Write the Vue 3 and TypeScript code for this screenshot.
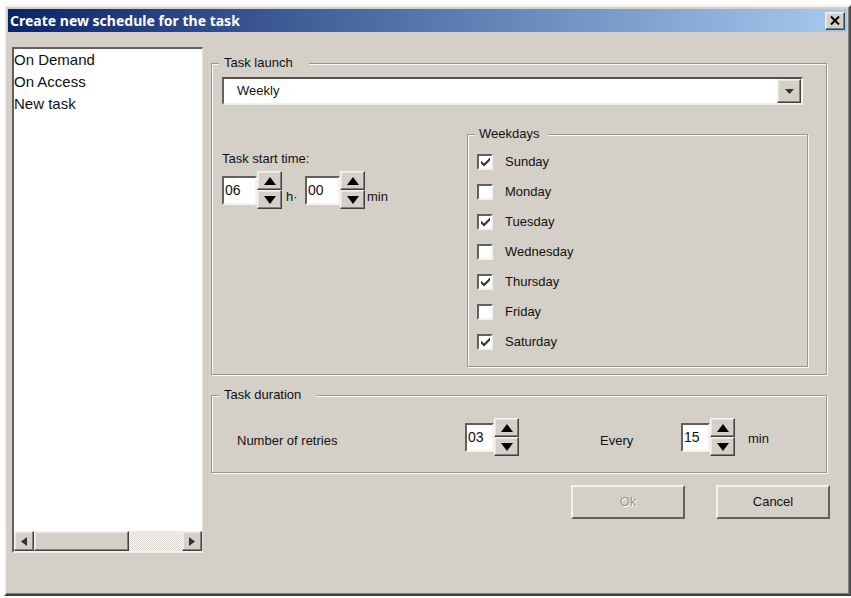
<script setup lang="ts">
import { reactive, ref } from 'vue'

interface Weekday {
  name: string
  checked: boolean
}

type SpinKey = 'hour' | 'minute' | 'retries' | 'interval'

const tasks: string[] = ['On Demand', 'On Access', 'New task']
const current = ref('')
const launch = ref('Weekly')
const launchModes: string[] = ['Hourly', 'Daily', 'Weekly', 'Monthly']

const days = reactive<Weekday[]>([
  { name: 'Sunday', checked: true },
  { name: 'Monday', checked: false },
  { name: 'Tuesday', checked: true },
  { name: 'Wednesday', checked: false },
  { name: 'Thursday', checked: true },
  { name: 'Friday', checked: false },
  { name: 'Saturday', checked: true },
])

const values = reactive<Record<SpinKey, string>>({
  hour: '06',
  minute: '00',
  retries: '03',
  interval: '15',
})
const limits: Record<SpinKey, number> = { hour: 23, minute: 59, retries: 99, interval: 59 }

function step(key: SpinKey, delta: number): void {
  const size = limits[key] + 1
  const next = ((Number(values[key]) || 0) + delta + size) % size
  values[key] = String(next).padStart(2, '0')
}
</script>

<template>
  <main class="page">
    <section class="window" role="dialog" aria-labelledby="dialog-title">
      <header class="titlebar">
        <h1 id="dialog-title">Create new schedule for the task</h1>
        <button type="button" class="raised close" aria-label="Close">
          <svg width="10" height="9" viewBox="0 0 10 9"><path d="M1 0.5 9 8.5M9 0.5 1 8.5" stroke="#000" stroke-width="2" /></svg>
        </button>
      </header>

      <div class="body">
        <nav class="list" aria-label="Tasks">
          <ul>
            <li v-for="task in tasks" :key="task">
              <button type="button" :aria-pressed="current === task" @click="current = task">{{ task }}</button>
            </li>
          </ul>
          <div class="scrollbar">
            <button type="button" class="raised" aria-label="Scroll left">
              <svg width="6" height="9" viewBox="0 0 6 9"><path d="M6 0v9L0 4.5z" fill="#333" /></svg>
            </button>
            <div class="track"><div class="raised thumb"></div></div>
            <button type="button" class="raised" aria-label="Scroll right">
              <svg width="6" height="9" viewBox="0 0 6 9"><path d="M0 0v9L6 4.5z" fill="#333" /></svg>
            </button>
          </div>
        </nav>

        <form class="settings" @submit.prevent>
          <fieldset class="group">
            <legend>Task launch</legend>
            <div class="launch">
              <div class="combo">
                <select v-model="launch" aria-label="Task launch">
                  <option v-for="mode in launchModes" :key="mode">{{ mode }}</option>
                </select>
                <span class="raised drop">
                  <svg width="9" height="5" viewBox="0 0 9 5"><path d="M0 0h9L4.5 5z" fill="#333" /></svg>
                </span>
              </div>

              <div class="when">
                <div class="start">
                  <label for="hour">Task start time:</label>
                  <div class="time">
                    <div class="spin wide">
                      <input id="hour" v-model="values.hour" type="text" />
                      <div class="arrows">
                        <button type="button" class="raised" aria-label="Hour up" @click="step('hour', 1)">
                          <svg width="12" height="8" viewBox="0 0 12 8"><path d="M6 0l6 8H0z" /></svg>
                        </button>
                        <button type="button" class="raised" aria-label="Hour down" @click="step('hour', -1)">
                          <svg width="12" height="8" viewBox="0 0 12 8"><path d="M0 0h12L6 8z" /></svg>
                        </button>
                      </div>
                    </div>
                    <span class="unit hours">h·</span>
                    <div class="spin wide">
                      <input id="minute" v-model="values.minute" type="text" />
                      <div class="arrows">
                        <button type="button" class="raised" aria-label="Minute up" @click="step('minute', 1)">
                          <svg width="12" height="8" viewBox="0 0 12 8"><path d="M6 0l6 8H0z" /></svg>
                        </button>
                        <button type="button" class="raised" aria-label="Minute down" @click="step('minute', -1)">
                          <svg width="12" height="8" viewBox="0 0 12 8"><path d="M0 0h12L6 8z" /></svg>
                        </button>
                      </div>
                    </div>
                    <label class="unit" for="minute">min</label>
                  </div>
                </div>

                <fieldset class="group weekdays">
                  <legend>Weekdays</legend>
                  <div class="days">
                    <label v-for="day in days" :key="day.name" class="day">
                      <span class="box">
                        <input v-model="day.checked" type="checkbox" />
                        <svg v-if="day.checked" width="9" height="9" viewBox="0 0 9 9"><path d="M0 2.5v3l3 3 6-6v-3l-6 6z" fill="#333" /></svg>
                      </span>
                      {{ day.name }}
                    </label>
                  </div>
                </fieldset>
              </div>
            </div>
          </fieldset>

          <fieldset class="group">
            <legend>Task duration</legend>
            <div class="duration">
              <label for="retries">Number of retries</label>
              <div class="spin">
                <input id="retries" v-model="values.retries" type="text" />
                <div class="arrows">
                  <button type="button" class="raised" aria-label="Retries up" @click="step('retries', 1)">
                    <svg width="12" height="8" viewBox="0 0 12 8"><path d="M6 0l6 8H0z" /></svg>
                  </button>
                  <button type="button" class="raised" aria-label="Retries down" @click="step('retries', -1)">
                    <svg width="12" height="8" viewBox="0 0 12 8"><path d="M0 0h12L6 8z" /></svg>
                  </button>
                </div>
              </div>
              <label for="interval">Every</label>
              <div class="spin">
                <input id="interval" v-model="values.interval" type="text" />
                <div class="arrows">
                  <button type="button" class="raised" aria-label="Interval up" @click="step('interval', 1)">
                    <svg width="12" height="8" viewBox="0 0 12 8"><path d="M6 0l6 8H0z" /></svg>
                  </button>
                  <button type="button" class="raised" aria-label="Interval down" @click="step('interval', -1)">
                    <svg width="12" height="8" viewBox="0 0 12 8"><path d="M0 0h12L6 8z" /></svg>
                  </button>
                </div>
              </div>
              <span>min</span>
            </div>
          </fieldset>

          <footer class="actions">
            <button type="submit" class="push" disabled>Ok</button>
            <button type="button" class="push">Cancel</button>
          </footer>
        </form>
      </div>
    </section>
  </main>
</template>

<style>
body {
  background: #fff;
}
</style>

<style scoped>
.page,
.page * {
  box-sizing: border-box;
}

.page {
  display: flex;
  min-height: 100vh;
  padding: 5px 0 2px 4px;
  font: 13px/16px "Liberation Sans", sans-serif;
  color: #111;
}

button,
input,
select {
  margin: 0;
  padding: 0;
  border-radius: 0;
  font: inherit;
  color: inherit;
}

svg {
  display: block;
}

.window {
  flex: 1;
  display: flex;
  flex-direction: column;
  min-width: 0;
  padding: 1px;
  background: #d4d0c8;
  border: 2px solid;
  border-color: #f6f3f0 #505050 #404040 #f6f3f0;
  box-shadow: inset -1px -1px 0 #808080;
}

.titlebar {
  display: flex;
  align-items: center;
  justify-content: space-between;
  height: 23px;
  margin: 1px 1px 0 1px;
  padding: 0 2px;
  background: linear-gradient(90deg, #0a246a, #a6caf0);
}

.titlebar h1 {
  margin: 0;
  font: bold 14px/20px "Noto Sans", "DejaVu Sans", sans-serif;
  color: #fff;
}

.raised {
  display: grid;
  place-items: center;
  background: #d4d0c8;
  border: 1px solid;
  border-color: #f4f2ee #404040 #404040 #f4f2ee;
  box-shadow: inset -1px -1px 0 #808080, inset 1px 1px 0 #e8e6e0;
}

.close {
  width: 20px;
  height: 18px;
}

.body {
  flex: 1;
  display: flex;
  gap: 8px;
  padding: 15px 18px 40px 5px;
}

.list {
  flex: 0 0 191px;
  display: flex;
  flex-direction: column;
  background: #fff;
  border: solid;
  border-width: 2px 1px 2px 2px;
  border-color: #606060 #e4e2dc #f4f2ee #606060;
}

.list ul {
  flex: 1;
  margin: 0;
  padding: 0;
  list-style: none;
}

.list li button {
  display: block;
  width: 100%;
  background: none;
  border: 0;
  text-align: left;
  font-size: 15px;
  line-height: 22px;
}

.list li button[aria-pressed="true"] {
  background: #0a246a;
  color: #fff;
}

.scrollbar {
  display: flex;
  height: 20px;
}

.scrollbar button {
  width: 20px;
}

.track {
  flex: 1;
  background: repeating-conic-gradient(#dedbd5 0 25%, #f6f5f2 0 50%) 0 0 / 2px 2px;
}

.thumb {
  width: 64%;
  height: 100%;
}

.settings {
  flex: 1;
  min-width: 0;
  padding-top: 8px;
}

.group {
  min-width: 0;
  margin: 0 3px 12px 0;
  padding: 0 7px;
  border: 1px solid #999690;
  box-shadow: inset 1px 1px 0 #faf9f7, 1px 1px 0 #faf9f7;
}

.group legend {
  padding: 0 16px 0 5px;
  background: #d4d0c8;
}

.launch {
  padding: 6px 11px 7px 3px;
}

.combo {
  display: grid;
  grid-template-columns: 1fr 24px;
  height: 28px;
  margin: 0 5px 21px 0;
  background: #fff;
  border: 2px solid;
  border-color: #505050 #f4f2ee #f4f2ee #606060;
}

.combo select {
  grid-area: 1 / 1 / 2 / 3;
  appearance: none;
  padding-left: 13px;
  background: transparent;
  border: 0;
}

.drop {
  grid-area: 1 / 2;
  pointer-events: none;
}

.when {
  display: grid;
  grid-template-columns: 245px 1fr;
}

.start {
  display: flex;
  flex-direction: column;
  gap: 4px;
  padding-top: 25px;
}

.time {
  display: flex;
}

.unit {
  align-self: flex-end;
  padding: 0 2px 4px;
}

.hours {
  width: 23px;
  padding-left: 4px;
}

.spin {
  display: flex;
  align-items: center;
}

.spin input {
  width: 29px;
  height: 29px;
  padding-left: 1px;
  background: #fff;
  border: 2px solid;
  border-color: #606060 #f4f2ee #f4f2ee #606060;
  font-size: 14px;
}

.spin.wide input {
  width: 35px;
}

.arrows {
  display: grid;
  grid-template-rows: 19px 19px;
  width: 25px;
}

.weekdays {
  margin: 0;
}

.weekdays legend {
  padding: 0 9px 0 4px;
}

.days {
  padding: 5px 2px 9px;
}

.day {
  display: flex;
  align-items: center;
  gap: 12px;
  height: 30px;
}

.box {
  display: grid;
  place-items: center;
}

.box input,
.box svg {
  grid-area: 1 / 1;
}

.box svg {
  pointer-events: none;
}

.box input {
  appearance: none;
  width: 16px;
  height: 16px;
  background: #fff;
  border: 2px solid;
  border-color: #606060 #f4f2ee #f4f2ee #606060;
}

.duration {
  display: grid;
  grid-template-columns: 228px 135px 81px 67px 1fr;
  align-items: center;
  padding: 15px 0 16px 18px;
}

.duration label {
  padding-top: 8px;
}

.duration span {
  padding-top: 4px;
}

.actions {
  display: flex;
  justify-content: flex-end;
  gap: 31px;
}

.push {
  width: 114px;
  height: 34px;
  background: #d4d0c8;
  border: 2px solid;
  border-color: #f4f2ee #606060 #606060 #f4f2ee;
}

.push:disabled {
  color: #999690;
  text-shadow: 1px 1px 0 #fff;
}
</style>
